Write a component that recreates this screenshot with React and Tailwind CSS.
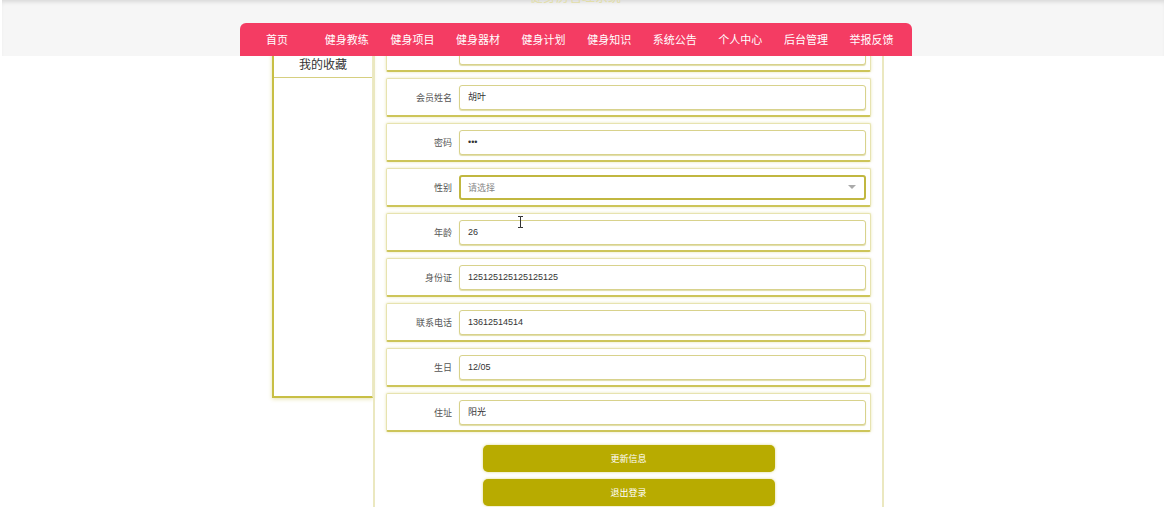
import React from 'react'

const navItems = ['健身教练', '健身项目', '健身器材', '健身计划', '健身知识', '系统公告', '个人中心', '后台管理', '举报反馈']

const rows = [
    { label: '', value: '' },
    { label: '会员姓名', value: '胡叶' },
    { label: '密码', value: '•••' },
    { label: '性别', value: '请选择', select: true },
    { label: '年龄', value: '26' },
    { label: '身份证', value: '125125125125125125' },
    { label: '联系电话', value: '13612514514' },
    { label: '生日', value: '12/05' },
    { label: '住址', value: '阳光' },
]

function FormRow({ label, value, select }) {
    return (
        <div className="h-[39px] flex items-center rounded-[2px] border border-[#e7e3b0] border-b-2 border-b-[#cdc55a] bg-white shadow-[0_0_3px_rgba(205,195,80,0.45)]">
            <div className="w-[65px] pt-[1px] text-right text-[9px] text-[#555]">{label}</div>
            <div
                className={
                    select
                        ? 'ml-[7px] w-[407px] h-[25px] flex items-center justify-between px-[7px] rounded-[3px] border-2 border-[#c1b740] bg-white'
                        : 'ml-[7px] w-[407px] h-[25px] flex items-center px-[8px] rounded-[3px] border border-[#d8d28c] bg-white shadow-[0_1px_1px_rgba(185,175,50,0.45)]'
                }
            >
                <span className={select ? 'pt-[1px] text-[9px] text-[#888]' : "pt-[1px] text-[9px] text-[#333] font-['Liberation_Sans','Noto_Sans_CJK_SC',sans-serif]"}>{value}</span>
                {select && <span className="mr-[1px] w-0 h-0 border-x-[4px] border-x-transparent border-t-[4px] border-t-[#aaa]"></span>}
            </div>
        </div>
    )
}

export default function App() {
    return (
        <div className="relative w-[1171px] h-[507px] overflow-hidden bg-white font-['Noto_Sans_CJK_SC','Noto_Sans',sans-serif]">
            {/* header band */}
            <div className="relative ml-[2px] w-[1162px] h-[56px] pt-[23px] bg-[#f6f6f6] shadow-[inset_0_4px_4px_-2px_rgba(0,0,0,0.12)] overflow-hidden">
                <span className="absolute left-[528px] top-[-14px] text-[13px] text-[#e2dea8]">健身房管理系统</span>
                <div className="ml-[238px] w-[672px] h-[33px] flex items-center rounded-t-[6px] bg-[#f43c63] text-white text-[11px]">
                    <div className="w-[74px] text-center">首页</div>
                    {navItems.map((item) => (
                        <div key={item} className="px-[10.8px]">{item}</div>
                    ))}
                </div>
            </div>

            {/* scrolled body */}
            <div className="h-[451px] overflow-hidden">
                <div className="-mt-[23px] ml-[272px] flex">
                    <div className="w-[101px] h-[365px] pt-[17px] border-l-2 border-b-2 border-[#c8bf45] border-r border-r-[#ece9c4] shadow-[0_1px_4px_rgba(200,190,70,0.45)]">
                        <div className="h-[28px] flex items-center justify-center border-b border-[#d6cf80] text-[12px] text-[#333]">我的收藏</div>
                    </div>
                    <div className="w-[511px] h-[500px] px-[11px] border-x-2 border-[#ebe8c0]">
                        <div className="flex flex-col gap-[6px]">
                            {rows.map((r, i) => (
                                <FormRow key={i} {...r} />
                            ))}
                        </div>
                        <div className="mt-[13px] flex flex-col items-center gap-[7px]">
                            <button className="w-[292px] h-[27px] rounded-[5px] bg-[#b8ab00] text-white text-[9px] shadow-[0_0_3px_rgba(200,190,60,0.6)]">更新信息</button>
                            <button className="w-[292px] h-[27px] rounded-[5px] bg-[#b8ab00] text-white text-[9px] shadow-[0_0_3px_rgba(200,190,60,0.6)]">退出登录</button>
                        </div>
                    </div>
                </div>
            </div>

            {/* mouse cursor */}
            <svg className="absolute left-[517px] top-[216px]" width="7" height="12" viewBox="0 0 7 12">
                <path d="M1 0.5h2.5M3.5 0.5h2.5M3.5 0.5v11M1 11.5h2.5M3.5 11.5h2.5" stroke="#333" strokeWidth="1" fill="none" />
            </svg>
        </div>
    )
}
